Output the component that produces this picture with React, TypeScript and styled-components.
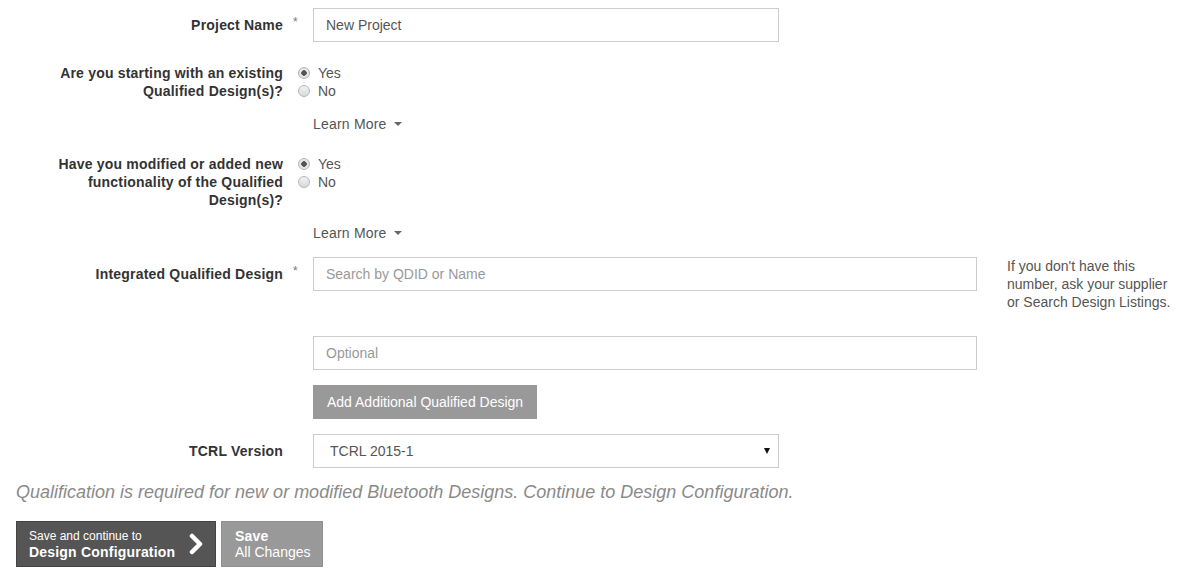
import React from "react";
import styled, { createGlobalStyle } from "styled-components";

const GlobalStyle = createGlobalStyle`
  body {
    margin: 0;
    background: #fff;
    font-family: "Liberation Sans", Arial, sans-serif;
    color: #555;
  }
`;

const Page = styled.div`
  width: 1191px;
  height: 575px;
  overflow: hidden;
  padding-top: 8px;
  box-sizing: border-box;
`;

const Row = styled.div<{ $mt?: number }>`
  display: grid;
  grid-template-columns: 283px 30px 664px 30px 1fr;
  margin-top: ${(p) => p.$mt ?? 0}px;
`;

const Label = styled.div<{ $pt?: number }>`
  grid-column: 1;
  justify-self: end;
  max-width: 236px;
  text-align: right;
  font-size: 14px;
  font-weight: bold;
  letter-spacing: 0.2px;
  line-height: 18px;
  color: #333;
  padding-top: ${(p) => p.$pt ?? 0}px;
`;

const Star = styled.span`
  grid-column: 2;
  font-size: 12px;
  color: #777;
  padding: 7px 0 0 10px;
`;

const Control = styled.div<{ $wide?: boolean }>`
  grid-column: 3;
  width: ${(p) => (p.$wide ? "664px" : "466px")};
`;

const TextInput = styled.input`
  box-sizing: border-box;
  width: 100%;
  height: 34px;
  border: 1px solid #ccc;
  padding: 0 12px;
  font-family: "Liberation Sans", Arial, sans-serif;
  font-size: 14px;
  color: #555;
  outline: none;
  &::placeholder {
    color: #999;
  }
`;

const SelectBox = styled.div`
  box-sizing: border-box;
  width: 100%;
  height: 34px;
  border: 1px solid #ccc;
  padding: 0 8px 0 16px;
  display: flex;
  align-items: center;
  justify-content: space-between;
  font-size: 14px;
  color: #555;
`;

const Caret = styled.span<{ $dark?: boolean }>`
  display: inline-block;
  width: 0;
  height: 0;
  border-left: ${(p) => (p.$dark ? "3.5px" : "4px")} solid transparent;
  border-right: ${(p) => (p.$dark ? "3.5px" : "4px")} solid transparent;
  border-top: ${(p) => (p.$dark ? "6px solid #111" : "4px solid #666")};
`;

const RadioGroup = styled.div`
  grid-column: 2 / 4;
  padding-left: 15px;
  display: flex;
  flex-direction: column;
`;

const RadioItem = styled.label`
  display: flex;
  align-items: center;
  gap: 8px;
  font-size: 14px;
  line-height: 18px;
  color: #555;
`;

const RadioDot = styled.span<{ $checked?: boolean }>`
  box-sizing: border-box;
  width: 12px;
  height: 12px;
  border-radius: 50%;
  border: 1px solid #b5b5b5;
  background: ${(p) =>
    p.$checked
      ? "radial-gradient(circle, #555 0 2.5px, #e6e6e6 3px)"
      : "linear-gradient(#f2f2f2, #d9d9d9)"};
`;

const LearnMore = styled.div`
  grid-column: 3;
  display: flex;
  align-items: center;
  gap: 7px;
  font-size: 14px;
  letter-spacing: 0.2px;
  line-height: 20px;
  color: #555;
`;

const Help = styled.div`
  grid-column: 5;
  font-size: 14px;
  line-height: 18px;
  color: #555;
  white-space: nowrap;
`;

const GreyButton = styled.button`
  height: 34px;
  padding: 0 13px;
  border: 1px solid #999;
  background: #999;
  color: #fff;
  font-family: "Liberation Sans", Arial, sans-serif;
  font-size: 14px;
`;

const Note = styled.p`
  margin: 13px 0 0 16px;
  font-size: 18px;
  line-height: 22px;
  font-style: italic;
  color: #8a8a8a;
`;

const Actions = styled.div`
  display: flex;
  gap: 5px;
  margin: 18px 0 0 16px;
`;

const ActionButton = styled.button<{ $primary?: boolean }>`
  box-sizing: border-box;
  height: 46px;
  width: ${(p) => (p.$primary ? "200px" : "102px")};
  border: 1px solid ${(p) => (p.$primary ? "#444" : "#8f8f8f")};
  background: ${(p) => (p.$primary ? "#555" : "#999")};
  color: #fff;
  display: flex;
  align-items: center;
  justify-content: space-between;
  padding: 0 11px 0 ${(p) => (p.$primary ? "12px" : "13px")};
  font-family: "Liberation Sans", Arial, sans-serif;
  text-align: left;
  white-space: nowrap;
`;

const ButtonText = styled.span`
  display: flex;
  flex-direction: column;
`;

const Small = styled.span<{ $size?: number; $bold?: boolean }>`
  font-size: ${(p) => p.$size ?? 14}px;
  font-weight: ${(p) => (p.$bold ? "bold" : "normal")};
  letter-spacing: ${(p) => (p.$bold ? "0.2px" : "0")};
  line-height: 16px;
`;

const Radios = ({ checked }: { checked: "yes" | "no" }) => (
  <RadioGroup>
    <RadioItem>
      <RadioDot $checked={checked === "yes"} />
      Yes
    </RadioItem>
    <RadioItem>
      <RadioDot $checked={checked === "no"} />
      No
    </RadioItem>
  </RadioGroup>
);

const App = () => {
  return (
    <Page>
      <GlobalStyle />
      <Row>
        <Label $pt={8}>Project Name</Label>
        <Star>*</Star>
        <Control>
          <TextInput defaultValue="New Project" />
        </Control>
      </Row>

      <Row $mt={22}>
        <Label>Are you starting with an existing Qualified Design(s)?</Label>
        <Radios checked="yes" />
      </Row>
      <Row $mt={14}>
        <LearnMore>
          Learn More <Caret />
        </LearnMore>
      </Row>

      <Row $mt={21}>
        <Label>Have you modified or added new functionality of the Qualified Design(s)?</Label>
        <Radios checked="yes" />
      </Row>
      <Row $mt={14}>
        <LearnMore>
          Learn More <Caret />
        </LearnMore>
      </Row>

      <Row $mt={14}>
        <Label $pt={8}>Integrated Qualified Design</Label>
        <Star>*</Star>
        <Control $wide>
          <TextInput placeholder="Search by QDID or Name" />
        </Control>
        <Help>
          If you don't have this
          <br />
          number, ask your supplier
          <br />
          or Search Design Listings.
        </Help>
      </Row>

      <Row $mt={25}>
        <Control $wide>
          <TextInput placeholder="Optional" />
        </Control>
      </Row>

      <Row $mt={15}>
        <Control>
          <GreyButton>Add Additional Qualified Design</GreyButton>
        </Control>
      </Row>

      <Row $mt={15}>
        <Label $pt={8}>TCRL Version</Label>
        <Control>
          <SelectBox>
            TCRL 2015-1
            <Caret $dark />
          </SelectBox>
        </Control>
      </Row>

      <Note>
        Qualification is required for new or modified Bluetooth Designs. Continue to Design
        Configuration.
      </Note>

      <Actions>
        <ActionButton $primary>
          <ButtonText>
            <Small $size={12}>Save and continue to</Small>
            <Small $bold>Design Configuration</Small>
          </ButtonText>
          <svg width="16" height="22" viewBox="0 0 16 22">
            <polyline
              points="4,3 12,11 4,19"
              fill="none"
              stroke="#fff"
              strokeWidth="4.5"
              strokeLinecap="round"
              strokeLinejoin="round"
            />
          </svg>
        </ActionButton>
        <ActionButton>
          <ButtonText>
            <Small $bold>Save</Small>
            <Small>All Changes</Small>
          </ButtonText>
        </ActionButton>
      </Actions>
    </Page>
  );
};

export default App;
